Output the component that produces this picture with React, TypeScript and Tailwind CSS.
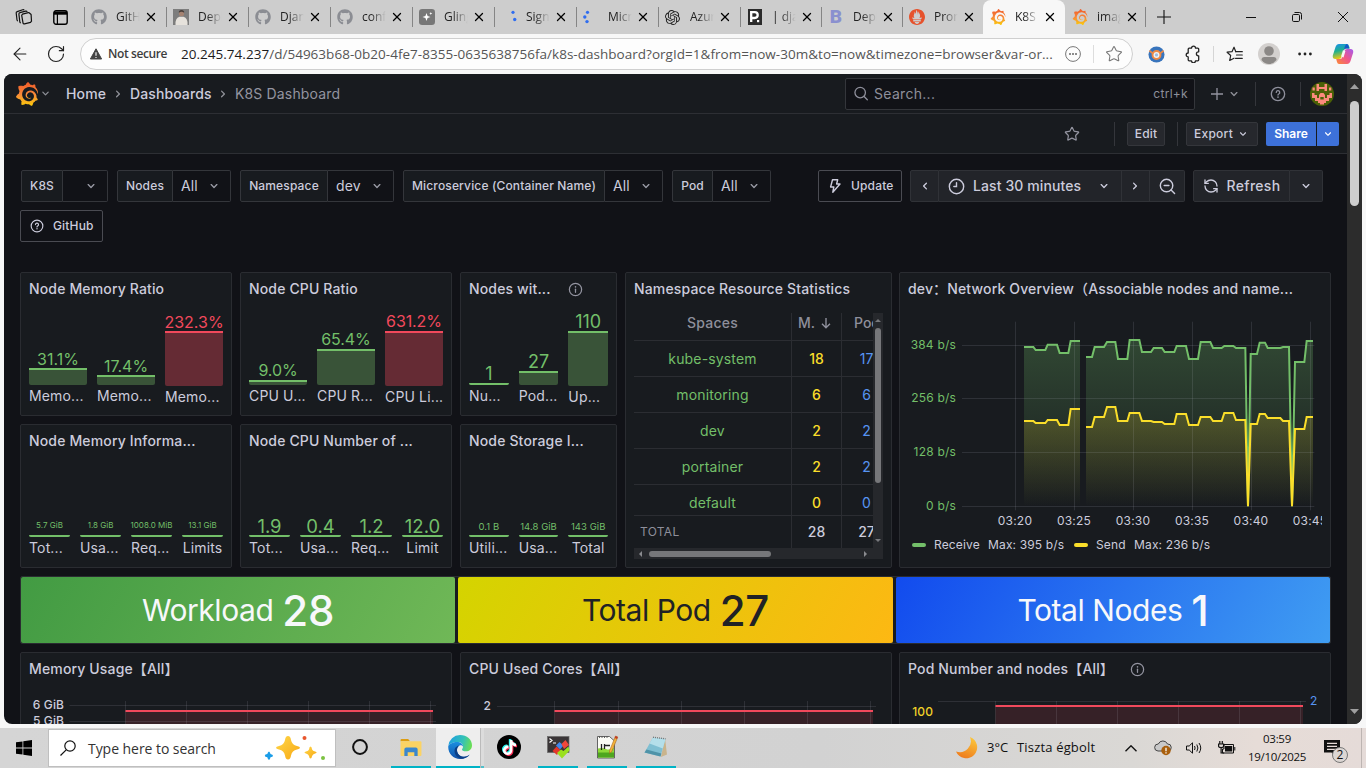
import React from "react";
import type { ReactNode } from "react";
import { FaGithub } from "react-icons/fa";
import { SiGrafana, SiOpenai, SiPrometheus, SiTiktok } from "react-icons/si";
import { RefreshCcw, Star, X, ArrowLeft, RotateCw } from "lucide-react";

/* ---------- shared icons ---------- */

function Angle({ className = "", dir = "down" }: { className?: string; dir?: "down" | "left" | "right" }) {
  const rot = dir === "down" ? "" : dir === "left" ? "rotate-90" : "-rotate-90";
  return (
    <svg viewBox="0 0 24 24" fill="currentColor" className={`h-4 w-4 shrink-0 ${rot} ${className}`}>
      <path d="M17,9.17a1,1,0,0,0-1.41,0L12,12.71,8.46,9.17a1,1,0,0,0-1.41,0,1,1,0,0,0,0,1.42l4.24,4.24a1,1,0,0,0,1.42,0L17,10.59A1,1,0,0,0,17,9.17Z" />
    </svg>
  );
}

function Help({ className = "" }: { className?: string }) {
  return (
    <svg viewBox="0 0 24 24" fill="none" stroke="currentColor" strokeWidth="2" strokeLinecap="round" className={`shrink-0 ${className}`}>
      <circle cx="12" cy="12" r="10" />
      <path d="M9.4 9.6a2.6 2.6 0 1 1 3.7 2.4c-.8.4-1.1.8-1.1 1.5" />
      <path d="M12 16.6v.1" strokeWidth="2.4" />
    </svg>
  );
}

function Info({ className = "" }: { className?: string }) {
  return (
    <svg viewBox="0 0 24 24" fill="none" stroke="currentColor" strokeWidth="2" strokeLinecap="round" className={`h-[15px] w-[15px] shrink-0 ${className}`}>
      <circle cx="12" cy="12" r="9.8" />
      <path d="M12 11.5v5" />
      <path d="M12 7.7v.1" strokeWidth="2.4" />
    </svg>
  );
}

function Grafana({ className = "" }: { className?: string }) {
  return (
    <span className={`flex shrink-0 ${className}`}>
      <SiGrafana className="h-full w-full" fill="url(#grafana-fill)" />
    </span>
  );
}

/* ---------- browser chrome ---------- */

function TabIcon({ kind }: { kind: string }) {
  switch (kind) {
    case "github":
      return <FaGithub className="h-4 w-4 text-[#8b8d93]" />;
    case "photo":
      return (
        <svg viewBox="0 0 16 16" className="h-4 w-4">
          <rect width="16" height="16" fill="#7d7d7d" />
          <circle cx="8.500" cy="4.500" r="2.600" fill="#a58372" />
          <path d="M5.900 3.800Q8.500 1.500 11.100 3.800V2.200Q8.500-.2 5.900 2.200z" fill="#4a403c" />
          <path d="M2.500 16q-.5-7 4-8.200h4q4.500 1.200 4 8.200z" fill="#e6e2dc" />
        </svg>
      );
    case "gling":
      return (
        <svg viewBox="0 0 16 16" className="h-4 w-4">
          <rect width="16" height="16" rx="3.200" fill="#777" />
          <path d="M7.500 4l1.100 2.900L11.500 8l-2.900 1.100L7.500 12l-1.100-2.900L3.500 8l2.900-1.100z" fill="#fff" />
          <path d="M11.800 3l.4 1.100 1.100.4-1.100.4-.4 1.100-.4-1.100-1.100-.4 1.100-.4z" fill="#fff" />
        </svg>
      );
    case "dots1":
      return (
        <svg viewBox="0 0 16 16" className="h-4 w-4">
          <circle cx="12" cy="3.300" r="1.600" fill="#2f6df0" />
          <circle cx="13.700" cy="10.500" r="1.700" fill="#2f6df0" />
        </svg>
      );
    case "dots2":
      return (
        <svg viewBox="0 0 16 16" className="h-4 w-4">
          <circle cx="4.500" cy="3.300" r="1.600" fill="#2f6df0" />
          <circle cx="1.800" cy="8" r="1.700" fill="#2f6df0" />
          <circle cx="4" cy="12.600" r="1.700" fill="#2f6df0" />
        </svg>
      );
    case "openai":
      return <SiOpenai className="h-[15px] w-[15px] text-[#222]" />;
    case "p":
      return (
        <svg viewBox="0 0 16 16" className="h-4 w-4">
          <rect width="14" height="16" x="1" fill="#2b2b2b" />
          <path d="M4.200 13V3.200h3.600a2.900 2.900 0 0 1 0 5.800H4.200" fill="none" stroke="#fff" strokeWidth="2.300" />
          <rect x="10" y="11" width="2.200" height="2.200" fill="#fff" />
        </svg>
      );
    case "b":
      return <span className="w-4 text-center font-['Roboto','Inter',sans-serif] text-[19px] leading-4 font-black text-[#8a90cf]">B</span>;
    case "prometheus":
      return <SiPrometheus className="h-4 w-4 text-[#e6522c]" />;
    default:
      return <Grafana className="h-4 w-4" />;
  }
}

const TABS = [
  { icon: "github", label: "GitHub", w: "w-[82px]" },
  { icon: "photo", label: "Deploy", w: "w-[82px]" },
  { icon: "github", label: "Django", w: "w-[82px]" },
  { icon: "github", label: "config", w: "w-[82px]" },
  { icon: "gling", label: "Gling AI", w: "w-[82px]" },
  { icon: "dots1", label: "Sign in", w: "w-[82px]" },
  { icon: "dots2", label: "Micros", w: "w-[82px]" },
  { icon: "openai", label: "Azure d", w: "w-[82px]" },
  { icon: "p", label: "| djan", w: "w-[81px]" },
  { icon: "b", label: "Deploy", w: "w-[81px]" },
  { icon: "prometheus", label: "Prome", w: "w-[81px]" },
  { icon: "grafana", label: "K8S D", w: "w-[82px]", active: true },
  { icon: "grafana", label: "image", w: "w-[80px]" },
];

function TabStrip() {
  return (
    <div className="flex h-[34px] shrink-0 items-stretch bg-[#cdcdcd]">
      <div className="flex w-[84px] shrink-0 items-center">
        <svg viewBox="0 0 18 18" fill="none" stroke="#111" strokeWidth="1.200" strokeLinejoin="round" className="ml-[15px] h-[18px] w-[18px]">
          <path d="M7.500 6.200l5.800-1.600a1 1 0 0 1 .8.200l2 1.700.4 6.700-1 1.200-6 1.500a1.200 1.200 0 0 1-1.500-1L6.700 7.300z" />
          <path d="M5.800 14.800a1.200 1.200 0 0 1-1-1L3.900 6.100a1.300 1.300 0 0 1 1-1.400l5.800-1.600a1.300 1.300 0 0 1 1.500.8" />
          <path d="M3 13a1.200 1.200 0 0 1-1-1L1.200 5a1.300 1.300 0 0 1 1-1.400l5.500-1.900a1.300 1.300 0 0 1 1.500.6" />
        </svg>
        <svg viewBox="0 0 15 15" className="ml-5 h-[15px] w-[15px]">
          <rect x=".8" y=".8" width="13.400" height="13.400" rx="2.200" fill="none" stroke="#000" strokeWidth="1.400" />
          <path d="M1 1.500h13v3.200H1z" fill="#000" />
          <path d="M4.400 4v10" stroke="#000" strokeWidth="1.200" />
        </svg>
      </div>
      <div className="flex w-[1061px] shrink-0">
        {TABS.map((t, i) => (
          <div key={i} className={`flex shrink-0 items-center ${t.w} ${t.active ? "rounded-t-lg bg-[#f7f7f7]" : ""}`}>
            <span className={t.active || TABS[i - 1]?.active ? "h-5 w-px" : "h-5 w-px bg-[#858585]"} />
            <span className="ml-[6px] flex h-4 w-4 shrink-0 items-center">
              <TabIcon kind={t.icon} />
            </span>
            <span className="ml-[9px] w-[25px] overflow-hidden font-['Open_Sans','Noto_Sans',sans-serif] text-[12px] whitespace-nowrap text-[#222] [mask-image:linear-gradient(to_right,black_35%,transparent_95%)]">
              {t.label}
            </span>
            <X className="ml-[3px] h-[14px] w-[14px] shrink-0 text-black" strokeWidth={2.2} />
          </div>
        ))}
      </div>
      <div className="flex flex-1 items-center">
        <span className="h-5 w-px bg-[#858585]" />
        <svg viewBox="0 0 14 14" stroke="#111" strokeWidth="1.100" className="ml-[11px] h-[14px] w-[14px]">
          <path d="M7 0v14M0 7h14" />
        </svg>
        <svg viewBox="0 0 10 10" stroke="#111" className="ml-[75px] h-[10px] w-[10px]">
          <path d="M0 5.500h10" />
        </svg>
        <svg viewBox="0 0 10 10" fill="none" stroke="#111" className="ml-[36px] h-[10px] w-[10px]">
          <rect x=".5" y="2.500" width="7" height="7" rx="1.200" />
          <path d="M2.500.5h5a2 2 0 0 1 2 2v5" />
        </svg>
        <svg viewBox="0 0 10 10" stroke="#111" className="ml-[36px] h-[10px] w-[10px]">
          <path d="M0 0l10 10M10 0L0 10" />
        </svg>
      </div>
    </div>
  );
}

function AddressBar() {
  return (
    <div className="flex h-10 shrink-0 items-center bg-[#f7f7f7]">
      <ArrowLeft className="ml-[10px] h-5 w-5 shrink-0 text-[#222]" strokeWidth={1.3} />
      <RotateCw className="ml-[16px] h-5 w-5 shrink-0 text-[#222]" strokeWidth={1.4} />
      <div className="ml-[14px] flex h-8 w-[1053px] shrink-0 items-center rounded-full border border-[#cfcfcf] bg-[#fdfdfd] font-['Open_Sans','Noto_Sans',sans-serif]">
        <svg viewBox="0 0 12 12" className="ml-[9px] h-3 w-3 shrink-0">
          <path d="M6 .8L11.600 11H.4z" fill="#444" stroke="#444" strokeLinejoin="round" />
          <path d="M6 4.200v3.500M6 9v1" stroke="#fff" strokeWidth="1.100" />
        </svg>
        <span className="ml-[6px] w-[73px] text-[12px] font-semibold tracking-[-0.400px] whitespace-nowrap text-[#3d3d3d]">Not secure</span>
        <span className="w-[880px] overflow-hidden text-[13.500px] tracking-[0.025px] whitespace-nowrap text-[#555]">
          <span className="text-[#1c1c1c]">20.245.74.237</span>
          /d/54963b68-0b20-4fe7-8355-0635638756fa/k8s-dashboard?orgId=1&amp;from=now-30m&amp;to=now&amp;timezone=browser&amp;var-or...
        </span>
        <svg viewBox="0 0 16 16" fill="none" stroke="#777" className="ml-[4px] h-4 w-4 shrink-0">
          <circle cx="8" cy="8" r="7.400" />
          <path d="M4.200 8h1.600M7.200 8h1.600M10.200 8h1.600" stroke="#444" strokeWidth="1.500" />
        </svg>
        <span className="ml-[12px] h-[18px] w-px bg-[#ddd]" />
        <Star className="ml-[11px] h-[18px] w-[18px] shrink-0 text-[#777]" strokeWidth={1.4} />
      </div>
      <svg viewBox="0 0 18 18" className="ml-[15px] h-[17px] w-[17px] shrink-0">
        <circle cx="9" cy="9" r="8.500" fill="#3874bc" />
        <circle cx="9" cy="9.500" r="4.200" fill="#f2f2f2" stroke="#ee8a45" strokeWidth="2" />
        <path d="M1.500 5l4 3M16.500 5l-4 3" stroke="#ee8a45" strokeWidth="1.800" />
        <circle cx="9" cy="9.500" r="1.700" fill="#9bbde2" />
      </svg>
      <svg viewBox="0 0 18 18" fill="none" stroke="#222" strokeWidth="1.300" strokeLinejoin="round" className="ml-[19px] h-[18px] w-[18px] shrink-0">
        <path d="M5.200 3.200H7.500a2 2 0 0 1 4 0h2.200a1 1 0 0 1 1 1v2.600h-.3a2 2 0 0 0 0 4h.3v4a1 1 0 0 1-1 1h-2.200a2 2 0 0 1-4 0H5.200a1 1 0 0 1-1-1v-2.800a2 2 0 0 1 0-4V4.200a1 1 0 0 1 1-1z" />
      </svg>
      <span className="ml-[11px] h-4 w-px bg-[#d5d5d5]" />
      <svg viewBox="0 0 18 18" fill="none" stroke="#222" strokeWidth="1.200" strokeLinejoin="round" strokeLinecap="round" className="ml-[12px] h-[18px] w-[18px] shrink-0">
        <path d="M9.800 6.700L8 2.200 6 6.700l-4.900.5 3.600 3.300-1 5L8 13.200" />
        <path d="M9.800 6.700h6.500M10.500 10h5.800M9.500 13.300h6.800" />
      </svg>
      <svg viewBox="0 0 22 22" className="ml-[14px] h-[22px] w-[22px] shrink-0">
        <circle cx="11" cy="11" r="11" fill="#d3d0ce" />
        <circle cx="11" cy="8" r="4.800" fill="#8b8886" />
        <path d="M3.500 17q0-3 3-3h9q3 0 3 3-3 4-7.500 4t-7.500-4z" fill="#8b8886" />
      </svg>
      <svg viewBox="0 0 14 4" fill="#222" className="ml-[18px] h-1 w-[14px] shrink-0">
        <circle cx="1.600" cy="2" r="1.400" />
        <circle cx="7" cy="2" r="1.400" />
        <circle cx="12.400" cy="2" r="1.400" />
      </svg>
      <svg viewBox="0 0 22 22" className="ml-[20px] h-[22px] w-[22px] shrink-0">
        <defs>
          <linearGradient id="cp-a" x1="0" y1="0" x2=".3" y2="1">
            <stop offset="0" stopColor="#1a8ef2" />
            <stop offset=".5" stopColor="#1fb08f" />
            <stop offset="1" stopColor="#f2c811" />
          </linearGradient>
          <linearGradient id="cp-b" x1="1" y1="0" x2="0" y2="1">
            <stop offset="0" stopColor="#a45af0" />
            <stop offset=".5" stopColor="#f0568a" />
            <stop offset="1" stopColor="#fb8c34" />
          </linearGradient>
        </defs>
        <path d="M7 1h8q1.500 0 2 2l.8 2.500H14q-1.600 0-2.100 1.600L9.600 14q-.6 2-2.600 2H3.500Q.3 16 .8 12.500L3.500 4Q4.500 1 7 1z" fill="url(#cp-a)" />
        <path d="M14.500 1q1.500 0 2 2l.8 2.500H14q-1.600 0-2.100 1.600L13 3z" fill="#1557c9" />
        <path d="M15 21H7q-1.500 0-2-2l-.8-3H8q1.600 0 2.100-1.600L12.400 8q.6-2 2.600-2h3.500q3.200 0 2.700 3.500L18.500 18q-1 3-3.500 3z" fill="url(#cp-b)" />
        <path d="M10.300 14l1.900-6.300" stroke="#f7f7f7" strokeWidth="2.600" />
      </svg>
    </div>
  );
}

/* ---------- Grafana header ---------- */

function GrafanaHeader() {
  return (
    <>
      <div className="flex h-10 shrink-0 items-center border-b border-[#2d2f34] bg-[#181b1f] text-[14px] text-[#ccccdc]">
        <Grafana className="ml-[11px] h-6 w-6" />
        <Angle className="ml-[-1px] h-[15px] w-[15px] text-[#8e9097]" />
        <span className="ml-[13px] w-[46px] font-medium tracking-[0.150px]">Home</span>
        <Angle dir="right" className="ml-[-2px] text-[#8e9097]" />
        <span className="ml-[4px] w-[87px] font-medium tracking-[0.100px] whitespace-nowrap">Dashboards</span>
        <Angle dir="right" className="ml-[-2px] text-[#8e9097]" />
        <span className="ml-[4px] tracking-[0.150px] whitespace-nowrap text-[#9394a0]">K8S Dashboard</span>
        <div className="ml-auto flex h-8 w-[350px] shrink-0 items-center rounded-[2px] border border-[#34363b] bg-[#111217] text-[#8e8f9b]">
          <svg viewBox="0 0 16 16" fill="none" stroke="currentColor" strokeWidth="1.400" strokeLinecap="round" className="ml-[8px] h-[15px] w-[15px]">
            <circle cx="6.600" cy="7" r="5.600" />
            <path d="M10.800 11.200L14.200 14.600" />
          </svg>
          <span className="ml-[5px] tracking-[0.300px]">Search...</span>
          <span className="mr-[6px] ml-auto text-[12px] tracking-[0.300px]">ctrl+k</span>
        </div>
        <svg viewBox="0 0 12 12" stroke="#9394a0" strokeWidth="1.300" className="ml-[16px] h-[12px] w-[12px] shrink-0">
          <path d="M6 0v12M0 6h12" />
        </svg>
        <Angle className="ml-[3px] text-[#8e9097]" />
        <span className="ml-[13px] h-6 w-px bg-[#34363b]" />
        <Help className="ml-[14px] h-4 w-4 text-[#8e8f9b]" />
        <span className="ml-[14px] h-6 w-px bg-[#34363b]" />
        <svg viewBox="0 0 24 24" className="mr-[13px] ml-[9px] h-6 w-6 shrink-0">
          <circle cx="12" cy="12" r="12" fill="#4a6006" />
          <path
            d="M6.500 2H9v3h5.500V2H17v7h-2.500V7H9v2H6.500zM2.500 5.500h2.300v3H2.500zM19 5.500h2.300v3H19zM2 11h2.500v2H7v3h2v-3l1.500-2h3L15 13v3h2v-3h2.500v-2H22v5h-3v3h-3v2h-2v1.500h-4V21H8v-2H5v-3H2zM10.300 15v2.500h3.400V15z"
            fill="#fb8a7c"
            fillRule="evenodd"
          />
        </svg>
      </div>
      <div className="flex h-10 shrink-0 items-center border-b border-[#2d2f34] bg-[#181b1f] text-[12px] font-medium text-[#ccccdc]">
        <Star className="ml-auto h-4 w-4 text-[#9394a0]" strokeWidth={1.8} />
        <span className="ml-[34px] h-6 w-px bg-[#34363b]" />
        <button className="ml-[12px] flex h-6 w-[38px] items-center justify-center rounded-[2px] border border-[#34363b] bg-[#26282d] tracking-[0.200px]">Edit</button>
        <span className="ml-[12px] h-6 w-px bg-[#34363b]" />
        <button className="ml-[8px] flex h-6 w-[72px] items-center rounded-[2px] border border-[#34363b] bg-[#26282d] pl-[7px] tracking-[0.250px]">
          Export
          <Angle className="ml-[3px] h-[14px] w-[14px]" />
        </button>
        <button className="ml-[8px] flex h-6 w-[50px] items-center justify-center rounded-l-[2px] bg-[#3d71d9] font-semibold text-white">Share</button>
        <button className="mr-[8px] ml-px flex h-6 w-[22px] items-center justify-center rounded-r-[2px] bg-[#3d71d9] text-white">
          <Angle className="h-[14px] w-[14px]" />
        </button>
      </div>
    </>
  );
}

/* ---------- controls ---------- */

function Variable({ label, value, labelW, valueW }: { label: string; value: string; labelW: string; valueW: string }) {
  return (
    <div className="flex h-8 shrink-0 text-[#ccccdc]">
      <span className={`flex items-center justify-center rounded-l-[2px] border border-[#34363b] bg-[#181b1f] text-[12px] font-medium tracking-[0.150px] whitespace-nowrap ${labelW}`}>{label}</span>
      <span className={`flex items-center rounded-r-[2px] border border-l-0 border-[#34363b] bg-[#111217] pl-[8px] text-[14px] tracking-[0.150px] ${valueW}`}>
        <span className="pb-[2px]">{value}</span>
        <Angle className="mr-[8px] ml-auto text-[#9a9ba6]" />
      </span>
    </div>
  );
}

function Controls() {
  const cell = "flex h-8 items-center justify-center border border-[#303237] bg-[#222429]";
  return (
    <div className="flex shrink-0 flex-col pt-4 text-[#ccccdc]">
      <div className="flex items-center pl-[17px]">
        <div className="flex gap-[9px]">
          <Variable label="K8S" value="" labelW="w-[42px]" valueW="w-[45px]" />
          <Variable label="Nodes" value="All" labelW="w-[56px]" valueW="w-[58px]" />
          <Variable label="Namespace" value="dev" labelW="w-[88px]" valueW="w-[66px]" />
          <Variable label="Microservice (Container Name)" value="All" labelW="w-[202px]" valueW="w-[58px]" />
          <Variable label="Pod" value="All" labelW="w-[41px]" valueW="w-[58px]" />
        </div>
        <button className="ml-[47px] flex h-8 w-[84px] items-center rounded-[2px] border border-[#4a4b52] text-[12px] font-medium tracking-[0.150px]">
          <svg viewBox="0 0 16 16" fill="none" stroke="currentColor" strokeWidth="1.400" strokeLinejoin="round" className="ml-[8px] h-4 w-4">
            <path d="M5.500 1.800h5.200L9.600 6H13L5.800 14.200 6.800 9H3.600z" />
          </svg>
          <span className="ml-[8px]">Update</span>
        </button>
        <div className="ml-[8px] flex text-[14px] font-medium">
          <span className={`${cell} w-[29px] rounded-l-[2px]`}>
            <Angle dir="left" />
          </span>
          <span className={`${cell} w-[183px] border-l-0`}>
            <svg viewBox="0 0 18 18" fill="none" stroke="currentColor" strokeWidth="1.500" strokeLinecap="round" className="h-[17px] w-[17px]">
              <circle cx="9" cy="9" r="7.600" />
              <path d="M9 5v4H6.200" />
            </svg>
            <span className="ml-[8px] w-[123px] pb-[2px] tracking-[0.100px] whitespace-nowrap">Last 30 minutes</span>
            <Angle />
          </span>
          <span className={`${cell} w-[28px] border-l-0 pr-px`}>
            <Angle dir="right" />
          </span>
          <span className={`${cell} w-[35px] rounded-r-[2px] border-l-0`}>
            <svg viewBox="0 0 18 18" fill="none" stroke="currentColor" strokeWidth="1.500" strokeLinecap="round" className="h-[17px] w-[17px]">
              <circle cx="8" cy="8" r="6.600" />
              <path d="M12.800 12.800L16.500 16.500M5.500 8h5" />
            </svg>
          </span>
        </div>
        <div className="ml-[8px] flex text-[14px] font-medium">
          <span className={`${cell} w-[97px] rounded-l-[2px]`}>
            <RefreshCcw className="h-4 w-4" strokeWidth={2} />
            <span className="ml-[8px] pb-[2px] tracking-[0.300px]">Refresh</span>
          </span>
          <span className={`${cell} w-[33px] rounded-r-[2px] border-l-0`}>
            <Angle />
          </span>
        </div>
      </div>
      <div className="mt-[8px] flex pl-[16px]">
        <button className="flex h-8 w-[83px] items-center rounded-[2px] border border-[#4a4b52] text-[12px] font-medium tracking-[0.150px]">
          <Help className="ml-[9px] h-[14px] w-[14px]" />
          <span className="ml-[9px]">GitHub</span>
        </button>
      </div>
    </div>
  );
}

/* ---------- panels ---------- */

function Panel({ title, info, className = "", children }: { title: string; info?: ReactNode; className?: string; children?: ReactNode }) {
  return (
    <section className={`flex flex-col overflow-hidden rounded-[2px] border border-[#2a2c31] bg-[#181b1f] ${className}`}>
      <header className="flex h-8 shrink-0 items-center px-2 text-[14px] font-medium tracking-[0.150px] whitespace-nowrap text-[#ccccdc]">
        <span className="pb-[2px]">{title}</span>
        {info}
      </header>
      {children}
    </section>
  );
}

type Gauge = { value: string; label: string; height: number; red?: boolean; center?: boolean; tall?: boolean };

function Gauges({ items, size }: { items: Gauge[]; size: string }) {
  return (
    <div className="flex flex-1 items-end gap-[10px] px-2 pb-2">
      {items.map((g, i) => (
        <div key={i} className="flex min-w-0 flex-1 flex-col">
          <span className={`flex justify-center whitespace-nowrap ${size} ${g.red ? "text-[#f2495c]" : "text-[#73bf69]"}`}>{g.value}</span>
          <span
            className={g.red ? "rounded-b-[2px] border-t-2 border-[#f2495c] bg-[#652b34]" : "rounded-b-[2px] border-t-2 border-[#73bf69] bg-[#395338]"}
            style={{ height: g.height }}
          />
          <span className={`text-[14px] tracking-[0.150px] whitespace-nowrap text-[#ccccdc] ${g.tall ? "h-[21px] leading-[22px]" : "h-[22px] leading-[22px]"} ${g.center ? "text-center" : "text-left"}`}>{g.label}</span>
        </div>
      ))}
    </div>
  );
}

const ROWS: [string, string, string][] = [
  ["kube-system", "18", "17"],
  ["monitoring", "6", "6"],
  ["dev", "2", "2"],
  ["portainer", "2", "2"],
  ["default", "0", "0"],
];

function SpacesTable() {
  const line = "border-[#2b2d32]";
  return (
    <div className="mt-[8px] ml-2 flex w-[249px] flex-col text-[14px]">
      <div className="flex h-[235px]">
        <div className="flex w-[239px] flex-col overflow-hidden">
          <div className={`flex h-[28px] shrink-0 border-b font-medium text-[#8e8f9b] ${line}`}>
            <span className={`flex w-[158px] shrink-0 items-center justify-center border-r pb-[9px] tracking-[0.200px] ${line}`}>Spaces</span>
            <span className={`flex w-[50px] shrink-0 items-center border-r pb-[9px] pl-[6px] ${line}`}>
              M.
              <svg viewBox="0 0 12 12" fill="none" stroke="currentColor" strokeWidth="1.400" className="mt-px ml-[5px] h-3 w-3">
                <path d="M6 1v9.500M2 6.800l4 4 4-4" />
              </svg>
            </span>
            <span className="flex w-[60px] shrink-0 items-center pb-[9px] pl-[12px]">Pod</span>
          </div>
          <div className="flex h-[174px] shrink-0 flex-col overflow-hidden">
            {ROWS.map(([name, m, p]) => (
              <div key={name} className={`flex h-[36px] shrink-0 border-b ${line}`}>
                <span className={`flex w-[158px] shrink-0 items-center justify-center border-r tracking-[0.150px] text-[#73bf69] ${line}`}>{name}</span>
                <span className={`flex w-[50px] shrink-0 items-center justify-center border-r font-medium text-[#fade2a] ${line}`}>{m}</span>
                <span className="flex w-[49px] shrink-0 items-center justify-center text-[#5794f2]">{p}</span>
              </div>
            ))}
          </div>
          <div className={`flex h-[33px] shrink-0 border-t ${line}`}>
            <span className={`flex w-[158px] shrink-0 items-center border-r pl-[6px] text-[12px] tracking-[0.300px] text-[#8e8f9b] ${line}`}>TOTAL</span>
            <span className={`flex w-[50px] shrink-0 items-center justify-center border-r pb-[2px] font-medium text-[#ccccdc] ${line}`}>28</span>
            <span className="flex w-[49px] shrink-0 items-center justify-center pb-[2px] font-medium text-[#ccccdc]">27</span>
          </div>
        </div>
        <div className="flex w-[10px] flex-col items-center bg-[#26282c]">
          <svg viewBox="0 0 6 3" className="mt-[6px] h-[3px] w-[6px]" fill="#77787c"><path d="M0 3l3-3 3 3z" /></svg>
          <span className="mt-[6px] h-[155px] w-[6px] rounded-full bg-[#76777a]" />
          <svg viewBox="0 0 6 3" className="mt-auto mb-[6px] h-[3px] w-[6px]" fill="#77787c"><path d="M0 0l3 3 3-3z" /></svg>
        </div>
      </div>
      <div className="flex h-[11px] items-center bg-[#26282c]">
        <svg viewBox="0 0 3 6" className="ml-[5px] h-[6px] w-[3px]" fill="#8a8b8f"><path d="M3 0L0 3l3 3z" /></svg>
        <span className="ml-[7px] h-[6px] w-[122px] rounded-full bg-[#76777a]" />
        <svg viewBox="0 0 3 6" className="mr-[16px] ml-auto h-[6px] w-[3px]" fill="#8a8b8f"><path d="M0 0l3 3-3 3z" /></svg>
      </div>
    </div>
  );
}

/* Step samples in chart units, one array per uninterrupted stretch. */
const RECEIVE = [
  "402,255 430,255 437,264 466,264 473,248 501,248 509,273 535,273 542,237 570,237",
  "588,285 606,285 614,255 642,255 651,240 676,240 684,291 712,291 719,234 748,234 756,270 783,270 791,258 816,258 824,270 853,270 860,252 888,252 897,291 924,291 932,240 961,240 969,258 995,258 1003,252 1030,252 1038,258 1066,258 1074,733 1082,276 1101,276 1109,242 1125,242 1133,258 1171,258 1179,255 1197,255 1206,733 1215,300 1243,300 1250,237 1269,237",
];
const SEND = [
  "402,477 430,477 437,483 466,483 473,474 501,474 509,489 535,489 542,441 570,441",
  "588,495 606,495 614,465 642,465 651,435 676,435 684,477 712,477 719,453 748,453 756,477 783,477 791,480 816,480 824,486 853,486 860,456 888,456 897,489 924,489 932,465 961,465 969,477 995,477 1003,453 1030,453 1038,474 1066,474 1074,733 1082,486 1101,486 1109,456 1125,456 1133,468 1171,468 1179,477 1197,477 1206,733 1215,501 1243,501 1250,465 1269,465",
];
const SPAN = [
  [402, 570],
  [588, 1269],
];

function NetworkChart() {
  const xs: [number, string][] = [
    [376.5, "03:20"],
    [553.5, "03:25"],
    [730.5, "03:30"],
    [907.5, "03:35"],
    [1084.5, "03:40"],
    [1261.5, "03:45"],
  ];
  const ys: [number, string][] = [
    [250.5, "384 b/s"],
    [409.5, "256 b/s"],
    [571.5, "128 b/s"],
    [733.5, "0 b/s"],
  ];
  return (
    <>
      <svg viewBox="42 165 1254 639" className="mt-3 ml-[4px] h-[213px] w-[418px] shrink-0 overflow-hidden">
        <defs>
          <linearGradient id="recv" gradientUnits="userSpaceOnUse" x1="0" x2="0" y1="234" y2="733">
            <stop offset="0" stopColor="#73bf69" stopOpacity=".27" />
            <stop offset="1" stopColor="#73bf69" stopOpacity="0" />
          </linearGradient>
          <linearGradient id="send" gradientUnits="userSpaceOnUse" x1="0" x2="0" y1="435" y2="733">
            <stop offset="0" stopColor="#fade2a" stopOpacity=".21" />
            <stop offset="1" stopColor="#fade2a" stopOpacity="0" />
          </linearGradient>
        </defs>
        {RECEIVE.map((p, i) => (
          <polygon key={i} points={`${SPAN[i][0]},733 ${p} ${SPAN[i][1]},733`} fill="url(#recv)" />
        ))}
        {SEND.map((p, i) => (
          <polygon key={i} points={`${SPAN[i][0]},733 ${p} ${SPAN[i][1]},733`} fill="url(#send)" />
        ))}
        {xs.map(([x, t]) => (
          <g key={t}>
            <path d={`M${x} 179V745`} stroke="#ccccdc" strokeOpacity=".13" strokeWidth="3" />
            <text x={x - 1.5} y="789" fontSize="36" textAnchor="middle" fill="#ccccdc" letterSpacing=".6">{t}</text>
          </g>
        ))}
        {ys.map(([y, t]) => (
          <g key={t}>
            <path d={`M216 ${y}H1273`} stroke="#ccccdc" strokeOpacity=".13" strokeWidth="3" />
            <text x="198" y={y + 11} fontSize="36" textAnchor="end" fill="#73bf69" letterSpacing=".6">{t}</text>
          </g>
        ))}
        {RECEIVE.map((p, i) => (
          <polyline key={i} points={p} fill="none" stroke="#73bf69" strokeWidth="6" />
        ))}
        {SEND.map((p, i) => (
          <polyline key={i} points={p} fill="none" stroke="#fade2a" strokeWidth="6" />
        ))}
      </svg>
      <div className="flex h-[30px] items-center pl-[12px] text-[12px] tracking-[0.150px] whitespace-nowrap text-[#ccccdc]">
        <span className="h-1 w-[14px] rounded-full bg-[#73bf69]" />
        <span className="ml-[8px] w-[54px]">Receive</span>
        <span className="w-[86px]">Max: 395 b/s</span>
        <span className="h-1 w-[14px] rounded-full bg-[#fade2a]" />
        <span className="ml-[8px] w-[38px]">Send</span>
        <span>Max: 236 b/s</span>
      </div>
    </>
  );
}

type Mini = {
  left: number;
  gridX: [number, number];
  gridY: number[];
  top: number;
  ticks: number[];
  line: number;
  end: number;
  labels: { x: number; y: number; t: string; c: string; start?: boolean; w?: number }[];
};

function MiniChart({ m }: { m: Mini }) {
  return (
    <svg viewBox={`${m.left} 685 430 40`} className="h-10 w-[430px] shrink-0">
      <rect x={m.ticks[0]} y={m.line} width={m.end - m.ticks[0]} height="40" fill="#f2495c" fillOpacity=".14" />
      {m.gridY.map((y) => (
        <path key={y} d={`M${m.gridX[0]} ${y}H${m.gridX[1]}`} stroke="#ccccdc" strokeOpacity=".12" />
      ))}
      {m.ticks.map((x) => (
        <path key={x} d={`M${x} ${m.top}V725`} stroke="#ccccdc" strokeOpacity=".12" />
      ))}
      <path d={`M${m.ticks[0]} ${m.line}H${m.end}`} stroke="#f2495c" strokeWidth="2" />
      {m.labels.map((l) => (
        <text key={l.t + l.x} x={l.x} y={l.y + 4} fontSize="12" fontWeight={l.w ?? 500} letterSpacing=".1" textAnchor={l.start ? "start" : "end"} fill={l.c}>
          {l.t}
        </text>
      ))}
    </svg>
  );
}

const MINI: Mini[] = [
  {
    left: 21, gridX: [69.5, 436], gridY: [705.5, 721.5], top: 701, ticks: [125.5, 186.5, 247.5, 308.5, 369.5, 430.5], line: 711, end: 433,
    labels: [{ x: 64, y: 705, t: "6 GiB", c: "#ccccdc" }, { x: 64, y: 721, t: "5 GiB", c: "#ccccdc" }],
  },
  {
    left: 461, gridX: [497, 876], gridY: [706.5], top: 701, ticks: [554.5, 618.5, 681.5, 744.5, 807.5, 870.5], line: 711, end: 873,
    labels: [{ x: 491, y: 706, t: "2", c: "#ccccdc" }],
  },
  {
    left: 900, gridX: [938, 1306], gridY: [701.5], top: 701, ticks: [995.5, 1056.5, 1117.5, 1178.5, 1239.5, 1300.5], line: 706, end: 1303,
    labels: [{ x: 933, y: 712, t: "100", c: "#f2d228" }, { x: 1310, y: 701, t: "2", c: "#5794f2", start: true, w: 400 }],
  },
];

function Banner({ label, value, className }: { label: string; value: string; className: string }) {
  return (
    <div className={`flex items-center justify-center rounded-[2px] ${className}`}>
      <span className="text-[30px] tracking-[-0.450px]">{label}</span>
      <span className="ml-[9px] text-[42px] font-medium tracking-[-0.300px]">{value}</span>
    </div>
  );
}

function Dashboard() {
  return (
    <div className="mt-[30px] ml-4 flex w-[1311px] shrink-0 flex-col">
      <div className="flex">
        <div className="flex flex-col gap-2">
          <div className="flex gap-2">
            <Panel title="Node Memory Ratio" className="h-36 w-[212px]">
              <Gauges size="h-[18px] text-[16px] leading-[18px]" items={[{ value: "31.1%", label: "Memo...", height: 17 }, { value: "17.4%", label: "Memo...", height: 10 }, { value: "232.3%", label: "Memo...", height: 55, red: true, tall: true }]} />
            </Panel>
            <Panel title="Node CPU Ratio" className="h-36 w-[212px]">
              <Gauges size="h-[19px] text-[16px] leading-[18px] tracking-[-0.100px]" items={[{ value: "9.0%", label: "CPU U...", height: 5 }, { value: "65.4%", label: "CPU R...", height: 36 }, { value: "631.2%", label: "CPU Li...", height: 55, red: true, tall: true }]} />
            </Panel>
            <Panel title="Nodes wit..." className="h-36 w-[157px]" info={<Info className="ml-[17px] text-[#9394a0]" />}>
              <Gauges size="h-[20px] text-[18px] leading-[22px]" items={[{ value: "1", label: "Nu...", height: 2 }, { value: "27", label: "Pod...", height: 14 }, { value: "110", label: "Up...", height: 55, tall: true }]} />
            </Panel>
          </div>
          <div className="flex gap-2">
            <Panel title="Node Memory Informa..." className="h-36 w-[212px]">
              <Gauges size="text-[8px] leading-[20px]" items={[{ value: "5.7 GiB", label: "Tot...", height: 2 }, { value: "1.8 GiB", label: "Usa...", height: 2 }, { value: "1008.0 MiB", label: "Req...", height: 2 }, { value: "13.1 GiB", label: "Limits", height: 2, center: true }]} />
            </Panel>
            <Panel title="Node CPU Number of ..." className="h-36 w-[212px]">
              <Gauges size="h-[20px] text-[18.500px] leading-[22px]" items={[{ value: "1.9", label: "Tot...", height: 2 }, { value: "0.4", label: "Usa...", height: 2 }, { value: "1.2", label: "Req...", height: 2 }, { value: "12.0", label: "Limit", height: 2, center: true }]} />
            </Panel>
            <Panel title="Node Storage I..." className="h-36 w-[157px]">
              <Gauges size="h-[18px] text-[9.500px] leading-[19px] tracking-[0.050px]" items={[{ value: "0.1 B", label: "Utili...", height: 2 }, { value: "14.8 GiB", label: "Usa...", height: 2 }, { value: "143 GiB", label: "Total", height: 2, center: true }]} />
            </Panel>
          </div>
        </div>
        <Panel title="Namespace Resource Statistics" className="ml-2 h-[296px] w-[267px]">
          <SpacesTable />
        </Panel>
        <Panel title="dev：Network Overview（Associable nodes and name..." className="ml-[7px] h-[296px] w-[432px]">
          <NetworkChart />
        </Panel>
      </div>
      <div className="mt-2 flex h-[68px] gap-[3px] rounded-[2px] border border-[#2a2c31] bg-[#181b1f]">
        <Banner label="Workload" value="28" className="w-[434px] bg-[linear-gradient(120deg,#429b43,#70b857)] text-[#f7f8fa]" />
        <Banner label="Total Pod" value="27" className="w-[435px] bg-[linear-gradient(120deg,#d4d400,#fdb813)] text-[#202226]" />
        <Banner label="Total Nodes" value="1" className="w-[434px] bg-[linear-gradient(120deg,#124bee,#409df2)] text-[#f7f8fa]" />
      </div>
      <div className="mt-2 flex">
        <Panel title="Memory Usage【All】" className="h-[200px] w-[432px]">
          <MiniChart m={MINI[0]} />
        </Panel>
        <Panel title="CPU Used Cores【All】" className="ml-2 h-[200px] w-[432px]">
          <MiniChart m={MINI[1]} />
        </Panel>
        <Panel title="Pod Number and nodes【All】" className="ml-[7px] h-[200px] w-[432px]" info={<Info className="ml-[16px] text-[#9394a0]" />}>
          <MiniChart m={MINI[2]} />
        </Panel>
      </div>
    </div>
  );
}

/* ---------- taskbar ---------- */

function EdgeIcon() {
  return (
    <svg viewBox="0 0 24 24" className="h-6 w-6">
      <defs>
        <linearGradient id="edge-top" x1="0" y1=".3" x2="1" y2=".5">
          <stop offset="0" stopColor="#1d9fe0" />
          <stop offset=".6" stopColor="#34c1b8" />
          <stop offset="1" stopColor="#6ade54" />
        </linearGradient>
        <linearGradient id="edge-low" x1="0" y1="0" x2="0" y2="1">
          <stop offset="0" stopColor="#1b8fe0" />
          <stop offset="1" stopColor="#1150a8" />
        </linearGradient>
      </defs>
      <path d="M.3 11A12 12 0 0 1 12 0c7 0 12 4.800 12 10.300 0 4-2.800 6-6 6-2.800 0-4-1-4-1.900 0-.7 1-1.200 1-3C15 9 12.800 7 9.500 7 5 7 1.500 8.800.3 11z" fill="url(#edge-top)" />
      <path d="M.3 11C1.500 8.800 5 7 9 7c3.500 0 6 2 6 4.500-1-1.300-2.500-1.500-3.500-1-2 1-3 3.500-2.300 6.200.9 3.300 4 5.500 7.600 5 2-.3 3.500-1 4.900-2.200A12 12 0 0 1 12 24C5 24-.4 18 .3 11z" fill="url(#edge-low)" />
      <path d="M9.200 16.700c-.7-2.700.3-5.200 2.300-6.200-3 .3-5 2.700-5 5.500 0 4.500 4 8 8.500 7.600 2.600-.4 5-1.700 6.500-3.800-4 3.300-11.200 2.200-12.300-3.100z" fill="#0c3f86" />
    </svg>
  );
}

function TaskButton({ icon, on, className = "" }: { icon: ReactNode; on?: boolean; className?: string }) {
  return (
    <div className={`flex h-10 w-10 shrink-0 flex-col items-center ${className}`}>
      <div className="flex h-[38px] items-center">{icon}</div>
      {on && <span className="h-[2px] w-full bg-[#00b3c6]" />}
    </div>
  );
}

function Taskbar() {
  return (
    <div className="flex h-10 shrink-0 items-center bg-[linear-gradient(90deg,#d5d5d5_0%,#d2d2d2_60%,#dad8d5_83%,#e6dcd7_92%,#e5dbd8_100%)] font-['Open_Sans','Noto_Sans',sans-serif] text-[#111]">
      <svg viewBox="0 0 16 16" className="ml-4 h-4 w-4 shrink-0">
        <path d="M0 2.300l6.500-.9v6.100H0zM7.300 1.300L16 0v7.500H7.300zM0 8.400h6.500v6.200L0 13.700zM7.300 8.400H16V16l-8.700-1.300z" />
      </svg>
      <div className="ml-[16px] flex h-[38px] w-[288px] shrink-0 items-center border border-[#bfbfbf] bg-white">
        <svg viewBox="0 0 16 16" fill="none" stroke="#111" strokeWidth="1.200" className="ml-[11px] h-4 w-4">
          <circle cx="10" cy="6" r="5.200" />
          <path d="M6.200 9.800L.5 15.500" />
        </svg>
        <span className="ml-[12px] w-[176px] text-[14px] tracking-[-0.050px] whitespace-nowrap text-[#333]">Type here to search</span>
        <svg viewBox="0 0 62 26" className="h-[26px] w-[62px]">
          <defs>
            <linearGradient id="spark" x1="0" y1="0" x2="1" y2="1">
              <stop offset="0" stopColor="#ffd84a" />
              <stop offset="1" stopColor="#f7a713" />
            </linearGradient>
          </defs>
          <path d="M24 1q2.500 0 3 4 1 5 6 6 3 .5 3 1.700T33 14.500q-5 1-6 6-.5 4-3 4t-3-4q-1-5-6-6-3-.6-3-1.800t3-1.700q5-1 6-6 .5-4 3-4z" fill="url(#spark)" />
          <path d="M46.500 11.500q1.200 0 1.600 3 .5 1.500 3 2 1.500.3 1.500 1t-1.500 1q-2.500.5-3 2.500-.5 2.500-1.600 2.500T45 21q-.5-2-3-2.500-1.500-.3-1.500-1t1.500-1q2.500-.5 3-2 .3-3 1.500-3z" fill="url(#spark)" />
          <path d="M5 16.500q.8 0 1.500 2.500Q9 19.500 9 20.700T6.500 22.200Q6 25 5 25T3.300 22.200Q.8 22 .8 20.700T3.300 19Q4 16.500 5 16.500z" fill="#1b9de8" />
          <circle cx="40.500" cy="3" r="2" fill="#e8562e" />
          <circle cx="59" cy="23" r="2" fill="#7cc242" />
        </svg>
      </div>
      <TaskButton
        className="ml-[4px]"
        icon={
          <svg viewBox="0 0 16 16" fill="none" stroke="#111" strokeWidth="2" className="h-4 w-4">
            <circle cx="8" cy="8" r="6.900" />
          </svg>
        }
      />
      <TaskButton
        on
        className="ml-[11px]"
        icon={
          <svg viewBox="0 0 22 20" className="h-[19px] w-[22px]">
            <path d="M0 2Q0 1 1 1h7l2 2.500H0z" fill="#dd9d11" />
            <path d="M0 3.500h21q1 0 1 1V18q0 1-1 1H1q-1 0-1-1z" fill="#fbd364" />
            <path d="M4 19v-7q0-2 2-2h10q2 0 2 2v7h-3.500v-4h-7v4z" fill="#3b87cd" />
          </svg>
        }
      />
      <div className="ml-[5px] flex h-10 w-[45px] shrink-0 flex-col items-center border-r border-[#bbb] bg-[#eeeeee]">
        <div className="flex h-[38px] items-center pl-[3px]">
          <EdgeIcon />
        </div>
        <span className="h-[2px] w-full bg-[#00b3c6]" />
      </div>
      <span className="flex h-10 w-[3px] shrink-0 flex-col justify-end bg-[#dcdcdc]">
        <span className="h-[2px] w-full bg-[#4fbfcb]" />
      </span>
      <TaskButton
        className="ml-[5px]"
        icon={
          <span className="flex h-6 w-6 items-center justify-center rounded-full bg-black">
            <SiTiktok className="h-[15px] w-[15px] text-white [filter:drop-shadow(1px_1px_0_#fe2c55)_drop-shadow(-1px_-1px_0_#25f4ee)]" />
          </span>
        }
      />
      <TaskButton
        on
        className="ml-[9px]"
        icon={
          <svg viewBox="0 0 24 24" className="h-6 w-6">
            <rect x="1.500" y="1.500" width="21.500" height="16" fill="#3a3537" stroke="#6a6a6a" strokeWidth=".7" />
            <path d="M3.500 3.500L6 5.500 3.500 7.500M7 8h3" fill="none" stroke="#fff" strokeWidth="1.200" />
            <path d="M6.500 16l4-4.500 4 3.500-3.500 5z" fill="#e2352c" />
            <path d="M10 10.500L13.500 7l4 3.500-3.500 4z" fill="#3f86ee" />
            <path d="M15.500 9l4-4 3.500 5-5 4z" fill="#f0473a" />
            <path d="M11 18l4-3.500 2.500 1.500 5-4.500 1 4-7.500 8z" fill="#9be01f" />
          </svg>
        }
      />
      <TaskButton
        on
        className="ml-[9px]"
        icon={
          <svg viewBox="0 0 24 24" className="h-6 w-6">
            <path d="M2.500 1.500h12l5 4.500v17h-17z" fill="#fbfbf6" stroke="#555" strokeWidth=".9" />
            <path d="M3 13.500q4-1 8 .5t8-1.500V22.500H3z" fill="#8fd93a" />
            <path d="M3 17.500h16v5H3z" fill="#4ea61f" />
            <path d="M4.500 1v2M7 1v2M9.500 1v2M12 1v2" stroke="#555" strokeWidth=".9" />
            <path d="M6.500 9v6M9.500 9v5M9 10.500h6" stroke="#222" strokeWidth="1.300" fill="none" />
            <path d="M20.500 1l2.300 1-6 14.500-2.300 2 .1-3z" fill="#f2b23a" stroke="#9a5a1a" strokeWidth=".5" />
            <path d="M20.500 1l2.300 1-.8 2-2.300-1z" fill="#c0392b" />
          </svg>
        }
      />
      <TaskButton
        on
        className="ml-[9px]"
        icon={
          <svg viewBox="0 0 24 24" className="h-6 w-6">
            <path d="M21 3l2 16.500-6 2.500z" fill="#c9b48c" />
            <path d="M9 2.500L21.500 4 16.500 21.500.5 17.500z" fill="#7fbfd2" />
            <path d="M9 2.500L21.500 4l-2.700 9.500L5.500 8.500z" fill="#b4dfea" />
            <path d="M.5 17.500l16 4 .9-3L2.500 14.500z" fill="#4f93a8" />
            <path d="M9 2.300L21.500 3.800" stroke="#777" strokeWidth="1.400" strokeDasharray="1 1" />
          </svg>
        }
      />
      <svg viewBox="0 0 22 22" className="ml-[280px] h-[22px] w-[22px] shrink-0">
        <defs>
          <linearGradient id="moon" x1=".7" y1="0" x2=".3" y2="1">
            <stop offset="0" stopColor="#fbc63b" />
            <stop offset="1" stopColor="#ee7a1c" />
          </linearGradient>
        </defs>
        <path d="M14 0A11 11 0 1 1 0 14.500 11 11 0 0 0 14 0z" fill="url(#moon)" />
      </svg>
      <span className="ml-[9px] w-[30px] text-[13px] tracking-[0.050px] whitespace-nowrap">3°C</span>
      <span className="w-[108px] text-[13px] tracking-[0.170px] whitespace-nowrap">Tiszta égbolt</span>
      <svg viewBox="0 0 12 7" fill="none" stroke="#111" strokeWidth="1.400" className="h-[7px] w-[12px] shrink-0">
        <path d="M.5 6.300L6 .8l5.500 5.500" />
      </svg>
      <svg viewBox="0 0 18 16" className="ml-[17px] h-4 w-[18px] shrink-0">
        <path d="M4 11a3.500 3.500 0 0 1 .3-7A5 5 0 0 1 13.500 4 3.500 3.500 0 0 1 14 11z" fill="#c9c9c9" stroke="#444" />
        <circle cx="12" cy="10.500" r="4.700" fill="#a95f0c" />
        <path d="M12 7.800v3.500M12 12.300v1.200" stroke="#fff" strokeWidth="1.300" />
      </svg>
      <svg viewBox="0 0 17 14" fill="none" stroke="#111" className="ml-[14px] h-[14px] w-[17px] shrink-0">
        <path d="M.5 5h2.700L6.500 1.800v10.400L3.200 9H.5zM8.500 5q1.200 2 0 4M10.800 3.500q2.200 3.500 0 7M13 2q3.500 5 0 10" />
      </svg>
      <svg viewBox="0 0 18 14" className="ml-[15px] h-[14px] w-[18px] shrink-0">
        <path d="M1.800 0v3M4.300 0v3M.6 3h5v2.300q0 1.200-2.500 1.200T.6 5.300zM3.100 6.500v5.500h3" fill="none" stroke="#111" strokeWidth="1.200" />
        <path d="M6 3.500h9.500v8.500H4.500V8H6z" fill="none" stroke="#111" />
        <path d="M7 5h7.200v5.500H7z" fill="#111" />
        <path d="M16.800 6v3.500" stroke="#111" />
      </svg>
      <div className="ml-[9px] flex w-[64px] shrink-0 flex-col items-center text-[11.500px] leading-[18px] tracking-[-0.300px]">
        <span>03:59</span>
        <span>19/10/2025</span>
      </div>
      <div className="relative mt-2 ml-[15px] h-6 w-6 shrink-0">
        <svg viewBox="0 0 16 16" className="h-4 w-4">
          <path d="M0 0h16v12.500h-5V16l-3.500-3.500H0z" fill="#111" />
          <path d="M3 3.300h10M3 6.300h10M3 9.300h10" stroke="#e5dbd8" strokeWidth="1.200" />
        </svg>
        <span className="absolute top-[7px] left-[8px] flex h-4 w-4 items-center justify-center rounded-full border border-[#777] bg-[#dcd6d3] text-[12px] leading-none">2</span>
      </div>
      <span className="mr-[4px] ml-auto h-10 w-px bg-[#bdb5b2]" />
    </div>
  );
}

export default function App() {
  return (
    <div className="flex h-[768px] w-[1366px] flex-col overflow-hidden bg-[#f7f7f7] font-['Inter','Noto_Sans_CJK_SC',sans-serif]">
      <svg className="absolute h-0 w-0">
        <defs>
          <linearGradient id="grafana-fill" x1="0" y1="0" x2="0" y2="1">
            <stop offset="0" stopColor="#f05a28" />
            <stop offset=".5" stopColor="#f7873a" />
            <stop offset="1" stopColor="#fbca0a" />
          </linearGradient>
        </defs>
      </svg>
      <TabStrip />
      <AddressBar />
      <main className="mx-1 mb-1 flex h-[650px] shrink-0 overflow-hidden rounded-lg bg-[#111217]">
        <div className="flex w-[1343px] flex-col overflow-hidden">
          <GrafanaHeader />
          <Controls />
          <Dashboard />
        </div>
        <div className="flex w-[15px] flex-col items-center bg-[#2c2c2c]">
          <svg viewBox="0 0 9 5" fill="#9f9f9f" className="mt-[10px] h-[5px] w-[9px]"><path d="M0 5l4.500-5L9 5z" /></svg>
          <span className="mt-[12px] h-[105px] w-[9px] rounded-full bg-[#cdcdcd]" />
          <svg viewBox="0 0 9 5" fill="#9f9f9f" className="mt-auto mb-[10px] h-[5px] w-[9px]"><path d="M0 0l4.500 5L9 0z" /></svg>
        </div>
      </main>
      <Taskbar />
    </div>
  );
}
